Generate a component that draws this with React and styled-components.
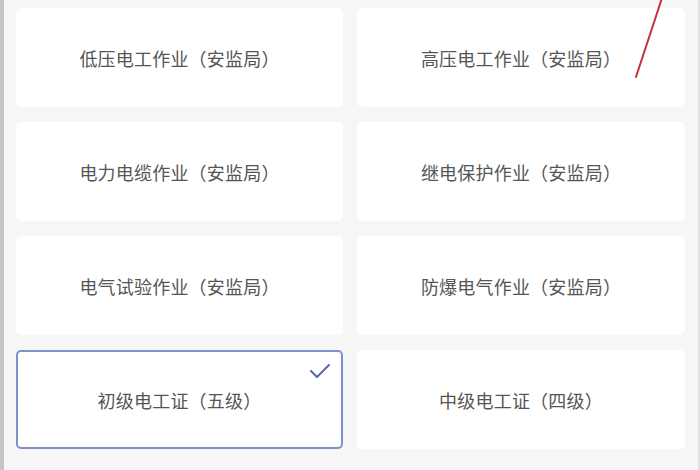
import React from "react";
import styled, { createGlobalStyle } from "styled-components";

const Global = createGlobalStyle`
  html, body { margin: 0; padding: 0; }
  body {
    width: 700px;
    height: 470px;
    overflow: hidden;
    background: #f6f6f6;
    font-family: "Noto Sans CJK SC", "Noto Sans", sans-serif;
  }
`;

const Page = styled.div`
  position: relative;
  box-sizing: border-box;
  width: 700px;
  height: 470px;
  background: #f6f6f6;
  border-left: 4px solid #c6c6c6;
  border-right: 2px solid #e2e2e2;
  padding: 8px 13px 0 12px;
  overflow: hidden;
`;

const Grid = styled.div`
  display: grid;
  grid-template-columns: 327px 328px;
  grid-auto-rows: 99px;
  column-gap: 14px;
  row-gap: 15px;
`;

const Card = styled.div`
  position: relative;
  box-sizing: border-box;
  display: flex;
  align-items: center;
  justify-content: center;
  background: #ffffff;
  border-radius: 5px;
  border: 2px solid ${(p) => (p.$selected ? "#7d93c8" : "#ffffff")};
  color: #555555;
  font-size: 18px;
  letter-spacing: 0.2px;
`;

const Check = styled.svg`
  position: absolute;
  top: 11px;
  right: 10px;
  width: 22px;
  height: 16px;
`;

const Annotation = styled.svg`
  position: absolute;
  top: 0;
  left: 0;
  width: 700px;
  height: 470px;
  pointer-events: none;
`;

const items = [
  { label: "低压电工作业（安监局）" },
  { label: "高压电工作业（安监局）" },
  { label: "电力电缆作业（安监局）" },
  { label: "继电保护作业（安监局）" },
  { label: "电气试验作业（安监局）" },
  { label: "防爆电气作业（安监局）" },
  { label: "初级电工证（五级）", selected: true },
  { label: "中级电工证（四级）" },
];

export default function App() {
  return (
    <>
      <Global />
      <Page>
        <Grid>
          {items.map((it) => (
            <Card key={it.label} $selected={it.selected}>
              {it.label}
              {it.selected && (
                <Check viewBox="0 0 22 16">
                  <path
                    d="M2 8 L8 14 L20 2"
                    fill="none"
                    stroke="#5c70a8"
                    strokeWidth="2.2"
                    strokeLinecap="round"
                    strokeLinejoin="round"
                  />
                </Check>
              )}
            </Card>
          ))}
        </Grid>
        <Annotation viewBox="0 0 700 470">
          <line
            x1="658"
            y1="-2"
            x2="632"
            y2="77"
            stroke="#c8323a"
            strokeWidth="2"
            strokeLinecap="round"
          />
        </Annotation>
      </Page>
    </>
  );
}
